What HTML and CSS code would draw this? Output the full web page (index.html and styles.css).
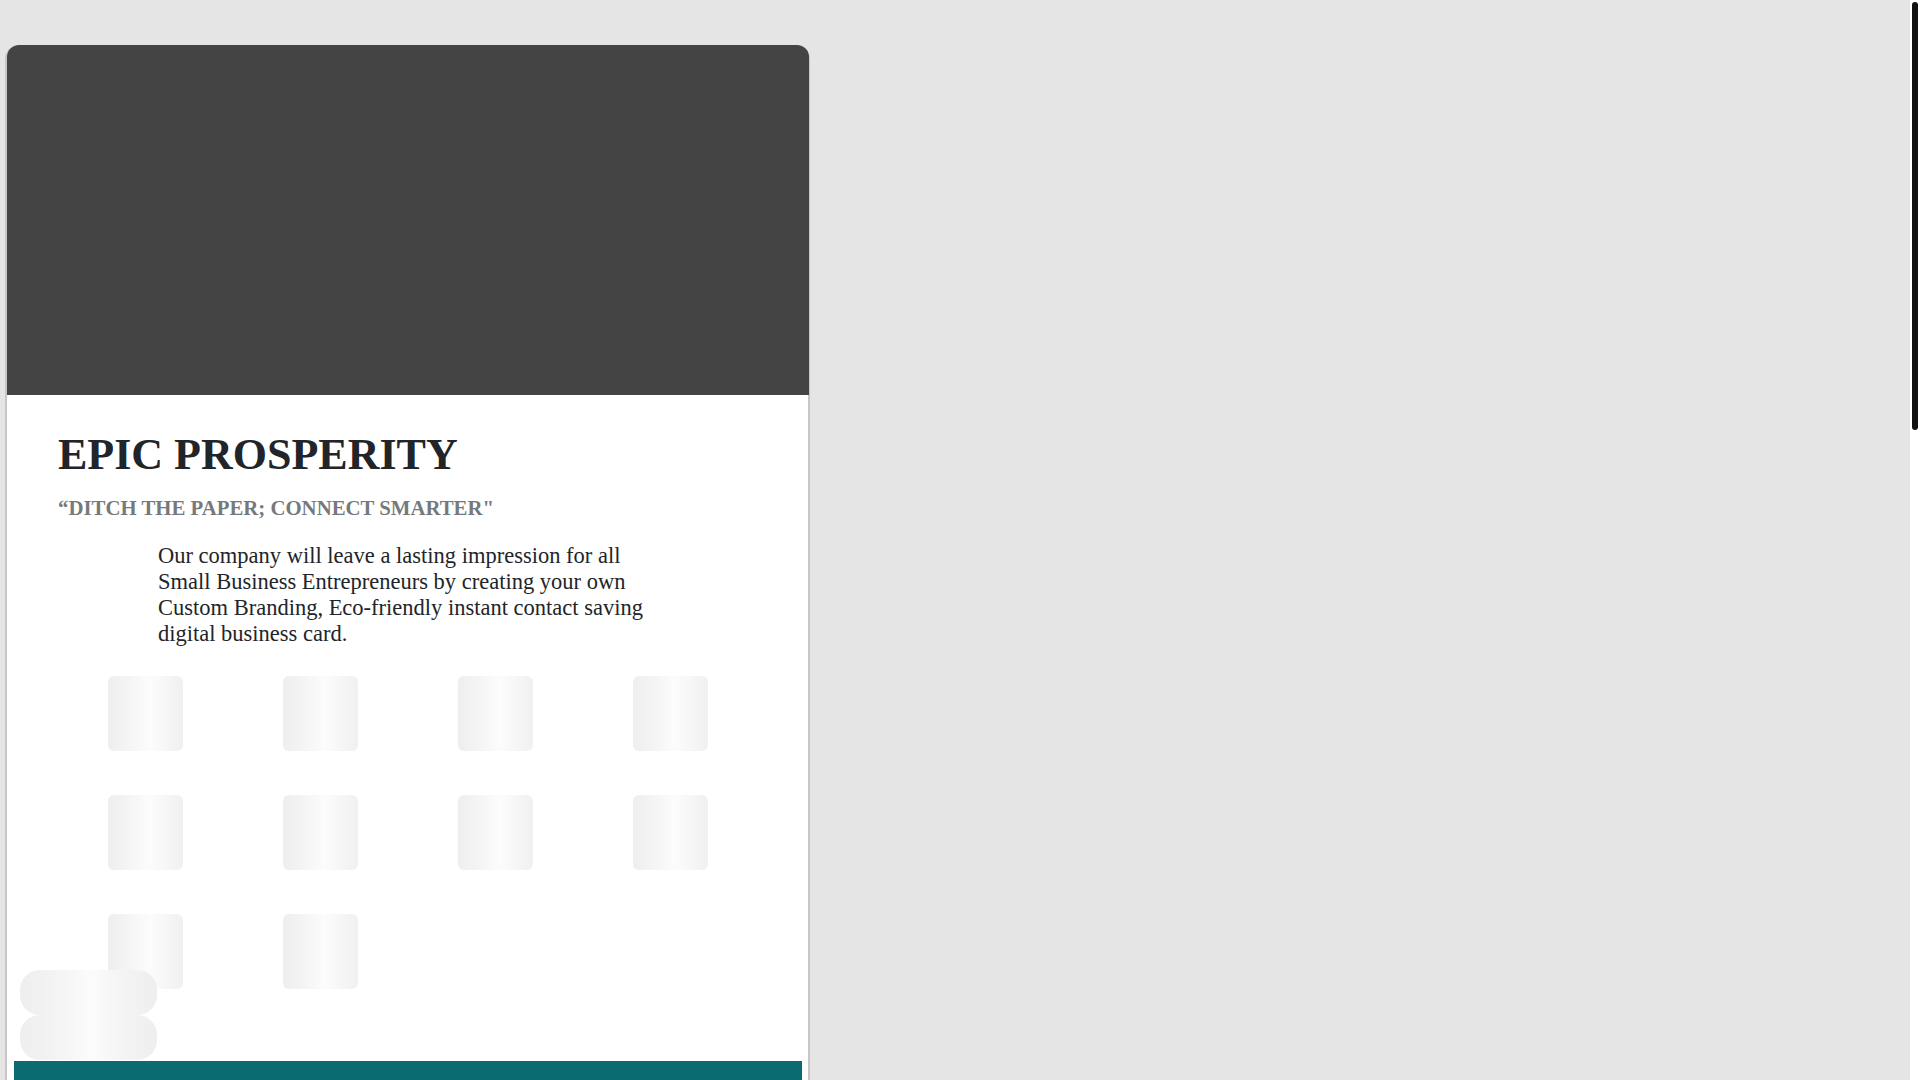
FILE: index.html
```html
<!DOCTYPE html>
<html lang="en">
<head>
<meta charset="utf-8">
<title>Epic Prosperity</title>
<link rel="stylesheet" href="styles.css">
</head>
<body>
<main class="card">
  <header class="cover"></header>
  <section class="content">
    <h1 class="title">EPIC PROSPERITY</h1>
    <h5 class="tagline">“DITCH THE PAPER; CONNECT SMARTER"</h5>
    <p class="about">Our company will leave a lasting impression for all Small Business Entrepreneurs by creating your own Custom Branding, Eco-friendly instant contact saving digital business card.</p>
    <div class="icons">
      <span class="tile"></span>
      <span class="tile"></span>
      <span class="tile"></span>
      <span class="tile"></span>
      <span class="tile"></span>
      <span class="tile"></span>
      <span class="tile"></span>
      <span class="tile"></span>
      <span class="tile"></span>
      <span class="tile"></span>
    </div>
  </section>
  <footer class="band"></footer>
</main>
<div class="floating">
  <span class="pill"></span>
  <span class="pill"></span>
</div>
<div class="scrollbar" aria-hidden="true"><span class="thumb"></span></div>
</body>
</html>
```

FILE: styles.css
```css
html {
  background: #e5e5e5;
}
body {
  margin: 0;
  background: #e5e5e5;
  font-family: "Liberation Serif", "Times New Roman", serif;
  color: #212529;
}
.card {
  box-sizing: content-box;
  width: 801px;
  margin: 45px 0 0 5px;
  background: #ffffff;
  border: 2px solid #c6c6c6;
  border-top: 0;
  border-radius: 14px 14px 0 0;
}
.cover {
  height: 350px;
  background: #444444;
  border-radius: 12px 12px 0 0;
  margin: 0 -1px 0 0;
}
.content {
  padding: 0 50px 0 51px;
}
.title {
  margin: 34px 0 0;
  font-size: 44px;
  line-height: 52.8px;
  font-weight: 700;
  color: #212529;
}
.tagline {
  margin: 14px 0 0;
  font-size: 20.8px;
  line-height: 24px;
  font-weight: 700;
  color: #76797c;
}
.about {
  width: 500px;
  margin: 23px auto 0;
  font-size: 22.5px;
  line-height: 26px;
  color: #212529;
}
.icons {
  margin-top: 29px;
  display: grid;
  grid-template-columns: repeat(4, 175px);
  row-gap: 44px;
  justify-items: center;
}
.tile {
  display: block;
  width: 75px;
  height: 75px;
  border-radius: 6px;
  background: linear-gradient(90deg, #eeeeee 0%, #f5f5f5 30%, #fcfcfc 55%, #f7f7f7 75%, #f0f0f0 100%);
}
.band {
  margin: 72px 6px 0 7px;
  height: 1639px;
  background: #0a6b70;
}
.floating {
  position: fixed;
  left: 20px;
  bottom: 20px;
  display: flex;
  flex-direction: column;
}
.pill {
  display: block;
  width: 137px;
  height: 45px;
  border-radius: 20px;
  background: linear-gradient(90deg, #eeeeee 0%, #f6f6f6 35%, #fcfcfc 52%, #f4f4f4 75%, #eeeeee 100%);
}
.scrollbar {
  position: fixed;
  top: 0;
  right: 0;
  bottom: 0;
  width: 10px;
  background: #ffffff;
}
.thumb {
  position: absolute;
  top: 2px;
  left: 2px;
  width: 6px;
  height: 428px;
  border-radius: 3px;
  background: #111111;
}
```
